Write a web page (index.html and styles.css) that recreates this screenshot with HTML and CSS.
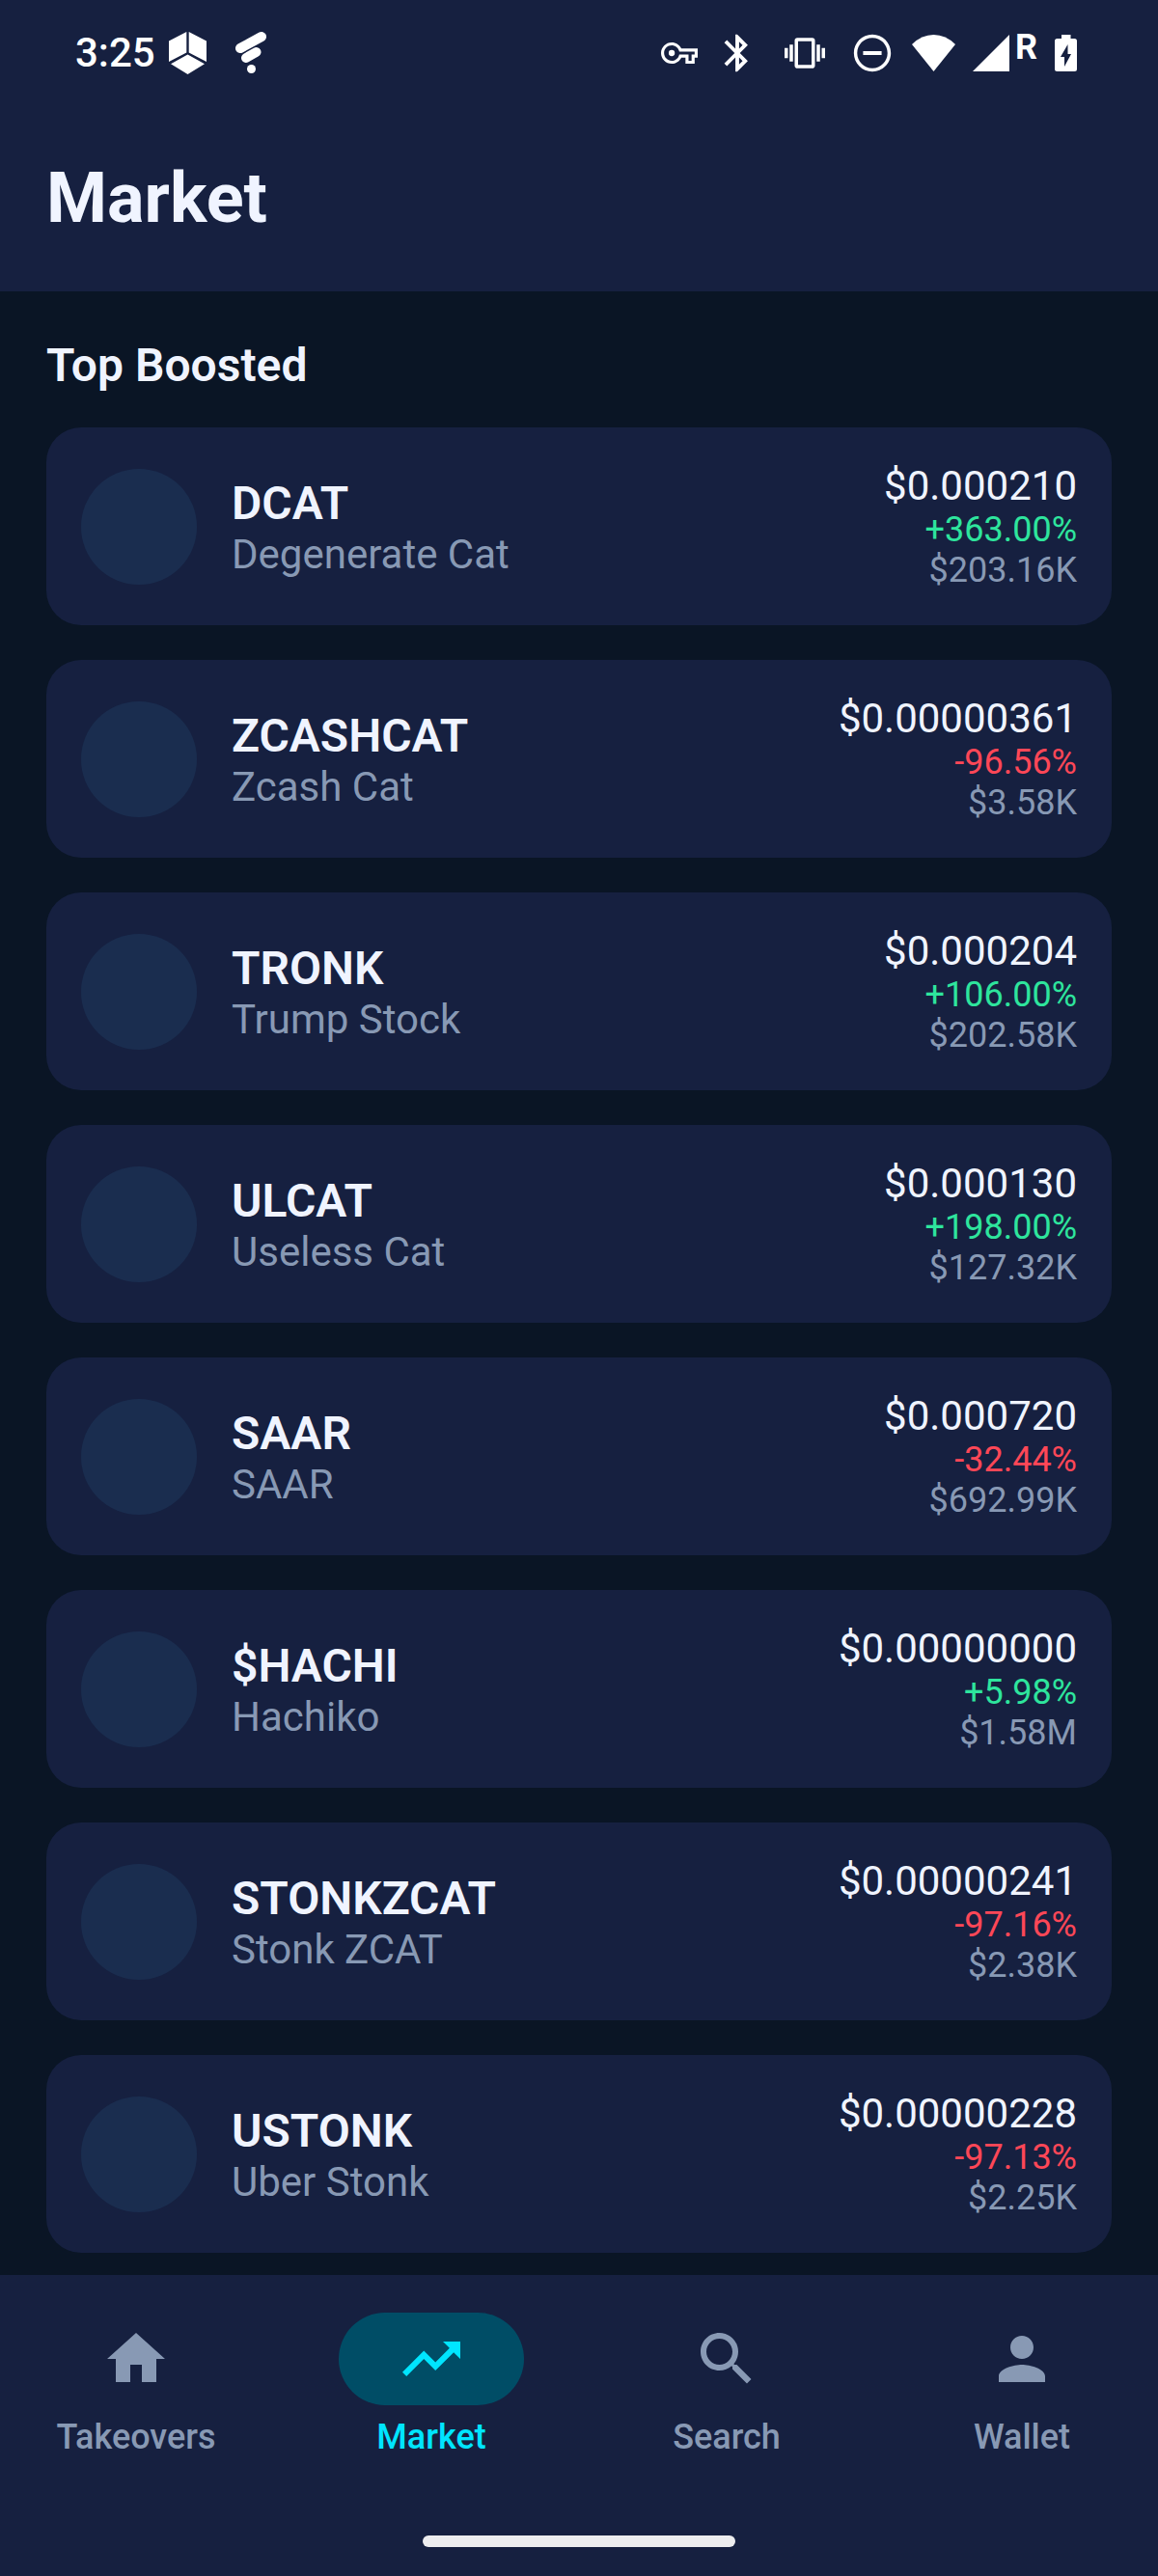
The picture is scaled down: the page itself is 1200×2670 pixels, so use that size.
FILE: index.html
```html
<!DOCTYPE html>
<html lang="en">
<head>
    <meta charset="UTF-8">
    <meta name="viewport" content="width=device-width, initial-scale=1.0">
    <title>Market</title>
    <link rel="stylesheet" href="styles.css">
</head>
<body>
    <header>
        <div class="status-bar">
            <div class="status-left">
                <span class="time">3:25</span>
                <svg width="39" height="44" viewBox="0 0 39 44"><path d="M18.3 0v21.5L0 31V9.5zM20.7 0v21.5L39 31V9.5zM19.5 23.5L37 33.2 19.5 44 2 33.2z"/></svg>
                <svg class="app-icon" width="33" height="44" viewBox="0 0 33 44"><path class="bar" d="M5 17L27 5M11 27L21.5 21"/><circle cx="16.5" cy="38.5" r="4.5"/></svg>
            </div>
            <div class="status-right">
                <!-- vpn key -->
                <svg width="38" height="38" viewBox="0 0 24 24"><path d="M22 19h-6v-4h-2.68c-1.14 2.42-3.6 4-6.32 4-3.86 0-7-3.14-7-7s3.14-7 7-7c2.72 0 5.17 1.58 6.32 4H24v6h-2v4zm-4-2h2v-4h2v-2H11.94l-.23-.67C11.01 8.34 9.11 7 7 7c-2.76 0-5 2.24-5 5s2.24 5 5 5c2.11 0 4.01-1.34 4.71-3.33l.23-.67H18v4z"/><circle cx="7" cy="12" r="2"/></svg>
                <!-- bluetooth -->
                <svg width="46" height="46" viewBox="0 0 24 24"><path d="M17.71 7.71L12 2h-1v7.59L6.41 5 5 6.41 10.59 12 5 17.59 6.41 19 11 14.41V22h1l5.71-5.71-4.3-4.29 4.3-4.29zM13 5.83l1.88 1.88L13 9.59V5.83zm1.88 10.46L13 18.17v-3.76l1.88 1.88z"/></svg>
                <!-- vibrate -->
                <svg width="58" height="42" viewBox="0 0 24 24"><path d="M0 15h2V9H0v6zm3 2h2V7H3v10zm19-8v6h2V9h-2zm-3 8h2V7h-2v10zM16.5 3h-9C6.67 3 6 3.67 6 4.5v15c0 .83.67 1.5 1.5 1.5h9c.83 0 1.5-.67 1.5-1.5v-15c0-.83-.67-1.5-1.5-1.5zM16 19H8V5h8v14z"/></svg>
                <!-- do not disturb -->
                <svg width="46" height="46" viewBox="0 0 24 24"><path d="M7 11h10v2H7zM12 2C6.48 2 2 6.48 2 12s4.48 10 10 10 10-4.48 10-10S17.52 2 12 2zm0 18.2c-4.52 0-8.2-3.68-8.2-8.2S7.48 3.8 12 3.8s8.2 3.68 8.2 8.2-3.68 8.2-8.2 8.2z"/></svg>
                <!-- wifi -->
                <svg width="45" height="38" viewBox="0 0 45 38"><path d="M0 10Q10 0 22.5 0T45 10L22.5 38z"/></svg>
                <div class="signal">
                    <svg width="38" height="38" viewBox="0 0 38 38"><path d="M38 0v38H0z"/></svg>
                    <span class="roaming">R</span>
                </div>
                <!-- battery -->
                <svg width="23" height="38" viewBox="0 0 23 38"><path fill-rule="evenodd" d="M7 0h9.5v4H20.500A2.5 2.5 0 0 1 23 6.500V35.500A2.5 2.5 0 0 1 20.5 38H2.500A2.5 2.5 0 0 1 0 35.500V6.500A2.5 2.5 0 0 1 2.5 4H7zM13.500 10L6 23h4v10l7-13h-3.500z"/></svg>
            </div>
        </div>
        <h1>Market</h1>
    </header>

    <main>
        <h2>Top Boosted</h2>
        <ul class="token-list">
            <li class="token">
                <div class="avatar"></div>
                <div class="names">
                    <div class="symbol">DCAT</div>
                    <div class="name">Degenerate Cat</div>
                </div>
                <div class="figures">
                    <div class="price">$0.000210</div>
                    <div class="change up">+363.00%</div>
                    <div class="cap">$203.16K</div>
                </div>
            </li>
            <li class="token">
                <div class="avatar"></div>
                <div class="names">
                    <div class="symbol">ZCASHCAT</div>
                    <div class="name">Zcash Cat</div>
                </div>
                <div class="figures">
                    <div class="price">$0.00000361</div>
                    <div class="change down">-96.56%</div>
                    <div class="cap">$3.58K</div>
                </div>
            </li>
            <li class="token">
                <div class="avatar"></div>
                <div class="names">
                    <div class="symbol">TRONK</div>
                    <div class="name">Trump Stock</div>
                </div>
                <div class="figures">
                    <div class="price">$0.000204</div>
                    <div class="change up">+106.00%</div>
                    <div class="cap">$202.58K</div>
                </div>
            </li>
            <li class="token">
                <div class="avatar"></div>
                <div class="names">
                    <div class="symbol">ULCAT</div>
                    <div class="name">Useless Cat</div>
                </div>
                <div class="figures">
                    <div class="price">$0.000130</div>
                    <div class="change up">+198.00%</div>
                    <div class="cap">$127.32K</div>
                </div>
            </li>
            <li class="token">
                <div class="avatar"></div>
                <div class="names">
                    <div class="symbol">SAAR</div>
                    <div class="name">SAAR</div>
                </div>
                <div class="figures">
                    <div class="price">$0.000720</div>
                    <div class="change down">-32.44%</div>
                    <div class="cap">$692.99K</div>
                </div>
            </li>
            <li class="token">
                <div class="avatar"></div>
                <div class="names">
                    <div class="symbol">$HACHI</div>
                    <div class="name">Hachiko</div>
                </div>
                <div class="figures">
                    <div class="price">$0.00000000</div>
                    <div class="change up">+5.98%</div>
                    <div class="cap">$1.58M</div>
                </div>
            </li>
            <li class="token">
                <div class="avatar"></div>
                <div class="names">
                    <div class="symbol">STONKZCAT</div>
                    <div class="name">Stonk ZCAT</div>
                </div>
                <div class="figures">
                    <div class="price">$0.00000241</div>
                    <div class="change down">-97.16%</div>
                    <div class="cap">$2.38K</div>
                </div>
            </li>
            <li class="token">
                <div class="avatar"></div>
                <div class="names">
                    <div class="symbol">USTONK</div>
                    <div class="name">Uber Stonk</div>
                </div>
                <div class="figures">
                    <div class="price">$0.00000228</div>
                    <div class="change down">-97.13%</div>
                    <div class="cap">$2.25K</div>
                </div>
            </li>
        </ul>
    </main>

    <footer>
        <nav>
            <a href="#takeovers">
                <span class="pill"><svg width="72" height="72" viewBox="0 0 24 24"><path d="M10 20v-6h4v6h5v-8h3L12 3 2 12h3v8z"/></svg></span>
                Takeovers
            </a>
            <a href="#market" class="active" aria-current="page">
                <span class="pill"><svg width="72" height="72" viewBox="0 0 24 24"><path d="M16 6l2.29 2.29-4.88 4.88-4-4L2 16.59 3.41 18l6-6 4 4 6.3-6.29L22 12V6z"/></svg></span>
                Market
            </a>
            <a href="#search">
                <span class="pill"><svg width="72" height="72" viewBox="0 0 24 24"><path d="M15.5 14h-.79l-.28-.27C15.41 12.59 16 11.11 16 9.5 16 5.91 13.09 3 9.5 3S3 5.91 3 9.5 5.91 16 9.5 16c1.61 0 3.09-.59 4.23-1.57l.27.28v.79l5 4.99L20.49 19l-4.99-5zm-6 0C7.01 14 5 11.99 5 9.5S7.01 5 9.5 5 14 7.01 14 9.5 11.99 14 9.5 14z"/></svg></span>
                Search
            </a>
            <a href="#wallet">
                <span class="pill"><svg width="72" height="72" viewBox="0 0 24 24"><path d="M12 12c2.21 0 4-1.79 4-4s-1.79-4-4-4-4 1.79-4 4 1.79 4 4 4zm0 2c-2.67 0-8 1.34-8 4v2h16v-2c0-2.66-5.33-4-8-4z"/></svg></span>
                Wallet
            </a>
        </nav>
        <div class="home-indicator"></div>
    </footer>
</body>
</html>
```
FILE: styles.css
```css
* {
    box-sizing: border-box;
}
body {
    margin: 0;
    min-height: 100vh;
    display: flex;
    flex-direction: column;
    background-color: #0a1525;
    color: #f0f4ff;
    font-family: Roboto, sans-serif;
}
svg {
    display: block;
    flex: none;
    fill: currentColor;
}

/* Header */
header {
    background-color: #162040;
    padding-bottom: 54px;
}
.status-bar {
    display: flex;
    justify-content: space-between;
    align-items: center;
    height: 109px;
    padding: 0 84px 0 78px;
    color: white;
}
.status-left {
    display: flex;
    align-items: center;
    gap: 14px;
}
.time {
    font-size: 42px;
    line-height: 49px;
    font-weight: 500;
}
.app-icon {
    margin-left: 16px;
}
.app-icon .bar {
    fill: none;
    stroke: currentColor;
    stroke-width: 10;
    stroke-linecap: round;
}
.status-right {
    display: flex;
    align-items: center;
    gap: 18px;
}
.signal {
    display: flex;
    align-items: flex-start;
    gap: 6px;
}
.roaming {
    font-size: 36px;
    line-height: 26px;
    font-weight: 700;
}
h1 {
    margin: 54px 48px 0;
    font-size: 72px;
    line-height: 85px;
    font-weight: 700;
}

/* Token list */
main {
    flex: 1;
    padding: 48px 48px 23px;
}
h2 {
    margin: 0 0 36px;
    font-size: 48px;
    line-height: 57px;
    font-weight: 600;
}
.token-list {
    list-style: none;
    margin: 0;
    padding: 0;
    display: flex;
    flex-direction: column;
    gap: 36px;
}
.token {
    display: flex;
    align-items: center;
    gap: 36px;
    padding: 36px;
    border-radius: 36px;
    background-color: #162040;
}
.avatar {
    width: 120px;
    height: 120px;
    flex: none;
    border-radius: 50%;
    background-color: #1a2d4f;
}
.names {
    flex: 1;
}
.symbol {
    font-size: 48px;
    line-height: 57px;
    font-weight: 600;
}
.name {
    font-size: 42px;
    line-height: 49px;
    color: #8899b4;
}
.figures {
    text-align: right;
}
.price {
    font-size: 42px;
    line-height: 49px;
}
.change, .cap {
    font-size: 36px;
    line-height: 42px;
}
.up {
    color: #2ee59d;
}
.down {
    color: #ff4757;
}
.cap {
    color: #8899b4;
}

/* Bottom navigation */
footer {
    position: sticky;
    bottom: 0;
    padding: 39px 0 30px;
    background-color: #162040;
}
nav {
    display: grid;
    grid-template-columns: repeat(4, 1fr);
    gap: 24px;
}
nav a {
    display: flex;
    flex-direction: column;
    align-items: center;
    gap: 12px;
    color: #8899b4;
    font-size: 36px;
    line-height: 42px;
    font-weight: 500;
    text-decoration: none;
}
.pill {
    display: flex;
    justify-content: center;
    align-items: center;
    width: 192px;
    height: 96px;
    border-radius: 48px;
}
nav .active {
    color: #00e5ff;
}
.active .pill {
    background-color: #004d66;
}
.home-indicator {
    width: 324px;
    height: 12px;
    margin: 81px auto 0;
    border-radius: 6px;
    background-color: #ededef;
}
```
